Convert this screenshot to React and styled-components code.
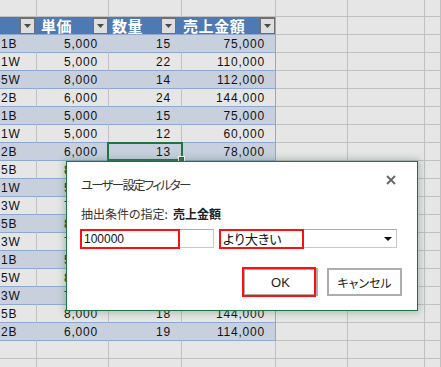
import React from "react";
import styled, { createGlobalStyle } from "styled-components";

const Global = createGlobalStyle`
  html, body { margin: 0; padding: 0; background: #e6e6e6; }
  body { width: 441px; height: 367px; overflow: hidden; }
`;

const Page = styled.div`
  position: relative;
  width: 441px;
  height: 367px;
  overflow: hidden;
  background: #e6e6e6;
`;

const Sheet = styled.div`
  display: grid;
  grid-template-columns: 37px 72px 73px 94px 72px 77px 1fr;
  grid-template-rows: 17px;
  grid-auto-rows: 18px;
  font-family: "Liberation Sans", "Noto Sans CJK JP", sans-serif;
  font-size: 12px;
  letter-spacing: 0.8px;
  color: #111;
`;

const palette = {
  sheet: { bg: "#e6e6e6", right: "#c0c0c0", bottom: "#c0c0c0" },
  head: { bg: "#4f79b2", right: "#4f79b2", bottom: "#8ea9d1" },
  dark: { bg: "#c8d0dd", right: "#c8d0dd", bottom: "#8ea9d1" },
  light: { bg: "#e6e6e6", right: "#c0c0c0", bottom: "#8ea9d1" },
};

const Cell = styled.div`
  position: relative;
  box-sizing: border-box;
  display: flex;
  align-items: center;
  justify-content: ${(p) => (p.$align === "right" ? "flex-end" : "flex-start")};
  padding: ${(p) => (p.$align === "right" ? "0 10px 0 0" : "0 0 0 1px")};
  background: ${(p) => palette[p.$kind].bg};
  border-right: 1px solid
    ${(p) => (p.$edge ? "#8ea9d1" : palette[p.$kind].right)};
  border-bottom: 1px solid ${(p) => palette[p.$kind].bottom};
  white-space: nowrap;
  overflow: visible;
`;

const HeadCell = styled(Cell)`
  padding: 0;
  color: #fff;
  font-family: "Noto Sans CJK JP", sans-serif;
  font-weight: 700;
  font-size: 15px;
  letter-spacing: 0.6px;
`;

const HeadLabel = styled.span`
  padding-left: ${(p) => p.$pad}px;
  line-height: 17px;
`;

const FilterButton = styled.div`
  box-sizing: border-box;
  width: 15px;
  height: 16px;
  margin-left: auto;
  margin-right: ${(p) => p.$gap}px;
  background: #dedede;
  border: 1px solid #6e6e6e;
  display: flex;
  align-items: center;
  justify-content: center;
`;

const Selection = styled.div`
  position: absolute;
  left: -2px;
  top: -1px;
  width: 76px;
  height: 19px;
  box-sizing: border-box;
  border: 2px solid #217346;
  pointer-events: none;
  z-index: 2;
`;

const FillHandle = styled.div`
  position: absolute;
  right: -4px;
  bottom: -4px;
  width: 5px;
  height: 5px;
  background: #217346;
  border: 1px solid #fff;
`;

const Dialog = styled.div`
  position: absolute;
  left: 66px;
  top: 161px;
  width: 352px;
  height: 150px;
  box-sizing: border-box;
  background: #fff;
  border: 1px solid #217346;
  box-shadow: 0 0 7px 2px rgba(70, 120, 90, 0.35);
  padding: 12px 14px 0 13px;
  display: flex;
  flex-direction: column;
  font-family: "Noto Sans CJK JP", sans-serif;
  font-feature-settings: "palt";
  color: #222;
  z-index: 5;
`;

const TitleBar = styled.div`
  height: 20px;
  display: flex;
  align-items: center;
  justify-content: space-between;
`;

const Title = styled.div`
  font-size: 12.5px;
  letter-spacing: -1.8px;
  padding-left: 1px;
  color: #333;
`;

const Close = styled.div`
  width: 12px;
  height: 12px;
  display: flex;
  align-items: center;
  justify-content: center;
  margin-right: 6px;
  margin-top: -8px;
`;

const Label = styled.div`
  margin-top: 9px;
  height: 20px;
  display: flex;
  align-items: center;
  font-size: 12px;
  padding-left: 1px;
  color: #333;
  b {
    font-weight: 700;
    color: #222;
    margin-left: 5px;
  }
`;

const Inputs = styled.div`
  margin-top: 6px;
  height: 19px;
  display: flex;
  gap: 5px;
`;

const Field = styled.div`
  position: relative;
  box-sizing: border-box;
  width: ${(p) => p.$w}px;
  height: 19px;
  border: 1px solid #c8c8c8;
  border-top-color: #ababab;
  display: flex;
  align-items: center;
  padding: 0 ${(p) => (p.$select ? 4 : 0)}px 0 3px;
  font-family: ${(p) =>
    p.$select ? '"Noto Sans CJK JP", sans-serif' : '"Liberation Sans", sans-serif'};
  font-size: ${(p) => (p.$select ? 13 : 12)}px;
  color: #111;
`;

const Arrow = styled.div`
  margin-left: auto;
  width: 0;
  height: 0;
  border-left: 4px solid transparent;
  border-right: 4px solid transparent;
  border-top: 4px solid #111;
`;

const Highlight = styled.div`
  position: absolute;
  left: ${(p) => p.$l}px;
  top: ${(p) => p.$t}px;
  width: ${(p) => p.$w}px;
  height: ${(p) => p.$h}px;
  box-sizing: border-box;
  border: 2px solid #ff1010;
  pointer-events: none;
`;

const Buttons = styled.div`
  margin-top: 20px;
  display: flex;
  justify-content: flex-end;
  gap: 9px;
  padding-right: 1px;
`;

const Button = styled.div`
  position: relative;
  box-sizing: border-box;
  width: 75px;
  height: 28px;
  border: 2px solid #adadad;
  display: flex;
  align-items: center;
  justify-content: center;
  font-family: ${(p) =>
    p.$latin ? '"Liberation Sans", sans-serif' : '"Noto Sans CJK JP", sans-serif'};
  font-size: ${(p) => (p.$latin ? 13 : 12)}px;
  color: #222;
`;

const rows = [
  ["1B", "5,000", "15", "75,000"],
  ["1W", "5,000", "22", "110,000"],
  ["5W", "8,000", "14", "112,000"],
  ["2B", "6,000", "24", "144,000"],
  ["1B", "5,000", "15", "75,000"],
  ["1W", "5,000", "12", "60,000"],
  ["2B", "6,000", "13", "78,000"],
  ["5B", "8,000", "10", "80,000"],
  ["1W", "5,000", "20", "100,000"],
  ["3W", "7,000", "16", "112,000"],
  ["5B", "8,000", "21", "168,000"],
  ["3W", "7,000", "17", "119,000"],
  ["1B", "5,000", "25", "125,000"],
  ["5W", "8,000", "11", "88,000"],
  ["3W", "7,000", "23", "161,000"],
  ["5B", "8,000", "18", "144,000"],
  ["2B", "6,000", "19", "114,000"],
];

const Tri = () => (
  <svg width="7" height="4" viewBox="0 0 7 4">
    <path d="M0 0 H7 L3.5 4 Z" fill="#4a4a4a" />
  </svg>
);

const EmptyRow = ({ k }) => (
  <>
    {Array.from({ length: 7 }).map((_, i) => (
      <Cell key={`${k}-${i}`} $kind="sheet" />
    ))}
  </>
);

export default function App() {
  return (
    <Page>
      <Global />
      <Sheet>
        <EmptyRow k="top" />
        <HeadCell $kind="head">
          <FilterButton $gap={1}>
            <Tri />
          </FilterButton>
        </HeadCell>
        <HeadCell $kind="head">
          <HeadLabel $pad={4}>単価</HeadLabel>
          <FilterButton $gap={0}>
            <Tri />
          </FilterButton>
        </HeadCell>
        <HeadCell $kind="head">
          <HeadLabel $pad={3}>数量</HeadLabel>
          <FilterButton $gap={5}>
            <Tri />
          </FilterButton>
        </HeadCell>
        <HeadCell $kind="head" $edge>
          <HeadLabel $pad={1}>売上金額</HeadLabel>
          <FilterButton $gap={0}>
            <Tri />
          </FilterButton>
        </HeadCell>
        <Cell $kind="sheet" />
        <Cell $kind="sheet" />
        <Cell $kind="sheet" />
        {rows.map((r, i) => {
          const kind = i % 2 === 0 ? "dark" : "light";
          return (
            <React.Fragment key={i}>
              <Cell $kind={kind}>{r[0]}</Cell>
              <Cell $kind={kind} $align="right">{r[1]}</Cell>
              <Cell $kind={kind} $align="right">
                {r[2]}
                {i === 6 && (
                  <Selection>
                    <FillHandle />
                  </Selection>
                )}
              </Cell>
              <Cell $kind={kind} $align="right" $edge>{r[3]}</Cell>
              <Cell $kind="sheet" />
              <Cell $kind="sheet" />
              <Cell $kind="sheet" />
            </React.Fragment>
          );
        })}
        <EmptyRow k="b1" />
        <EmptyRow k="b2" />
      </Sheet>

      <Dialog>
        <TitleBar>
          <Title>ユーザー設定フィルター</Title>
          <Close>
            <svg width="10" height="10" viewBox="0 0 10 10">
              <path d="M1 1 L9 9 M9 1 L1 9" stroke="#6a6a6a" strokeWidth="2" />
            </svg>
          </Close>
        </TitleBar>
        <Label>
          抽出条件の指定:<b>売上金額</b>
        </Label>
        <Inputs>
          <Field $w={134}>
            100000
            <Highlight $l={-1} $t={-1} $w={100} $h={20} />
          </Field>
          <Field $w={178} $select>
            より大きい
            <Arrow />
            <Highlight $l={-1} $t={-1} $w={85} $h={20} />
          </Field>
        </Inputs>
        <Buttons>
          <Button $latin>
            OK
            <Highlight $l={-3} $t={-3} $w={74} $h={30} />
          </Button>
          <Button>キャンセル</Button>
        </Buttons>
      </Dialog>
    </Page>
  );
}
